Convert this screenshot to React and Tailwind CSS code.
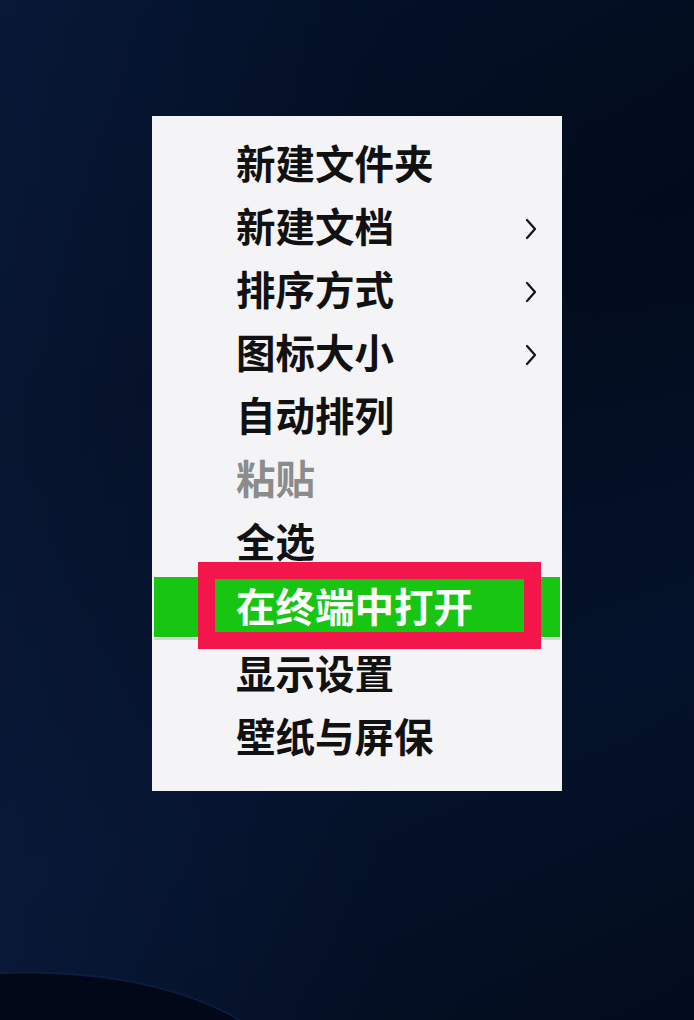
import React from "react";

const items = [
  { label: "新建文件夹" },
  { label: "新建文档", sub: true },
  { label: "排序方式", sub: true },
  { label: "图标大小", sub: true },
  { label: "自动排列" },
  { label: "粘贴", disabled: true },
  { label: "全选" },
  { label: "在终端中打开", active: true },
  { label: "显示设置" },
  { label: "壁纸与屏保" },
];

function Chevron() {
  return (
    <svg width="14" height="24" viewBox="0 0 14 24" className="shrink-0 mt-[8px]">
      <path d="M3 3 L11 12 L3 21" fill="none" stroke="#111" strokeWidth="2.2" strokeLinecap="round" strokeLinejoin="round" />
    </svg>
  );
}

export default function App() {
  return (
    <div
      className="relative w-[694px] h-[1020px] overflow-hidden bg-[linear-gradient(160deg,#031129_0%,#020b1b_35%,#04122b_70%,#030c1c_100%)]"
      style={{ fontFamily: '"Noto Sans CJK SC", "Noto Sans", sans-serif' }}
    >
      <div className="absolute inset-0 bg-[linear-gradient(90deg,rgba(12,30,66,0.55)_0%,rgba(5,18,40,0.2)_55%,rgba(0,0,0,0)_100%)]" />
      <svg className="absolute left-0 bottom-0" width="300" height="60" viewBox="0 0 300 60">
        <path d="M0 13 C80 10 170 20 240 60 L0 60 Z" fill="#020818" />
        <path d="M0 13 C80 10 170 20 240 60" fill="none" stroke="#0c1d42" strokeWidth="2" />
      </svg>

      <div className="relative flex pt-[116px] pl-[152px]">
        <div className="relative w-[410px] h-[675px] bg-[#f4f4f6] pt-[14px] flex flex-col">
          {items.map((it, i) => (
            <div key={i} className="flex flex-col">
              <div
                className={
                  "flex items-center pr-[24px] text-[39.5px] font-bold leading-none " +
                  (it.active
                    ? "bg-[#19c513] text-white mx-[2px] pl-[82px] h-[60px] mt-[6px] pb-[5px] "
                    : "h-[63px] pl-[84px] ") +
                  (it.disabled ? "text-[#8c8c8c] " : it.active ? "" : "text-[#111111] ")
                }
              >
                <span className="flex-1">{it.label}</span>
                {it.sub && <Chevron />}
              </div>
              {it.active && <div className="h-[2px] mt-[1px] mx-[2px] bg-[#d4d4d8]" />}
            </div>
          ))}
          <div className="absolute left-[46px] top-[446px] w-[343px] h-[87px] border-[17px] border-[#f2164a]" />
        </div>
      </div>
    </div>
  );
}
